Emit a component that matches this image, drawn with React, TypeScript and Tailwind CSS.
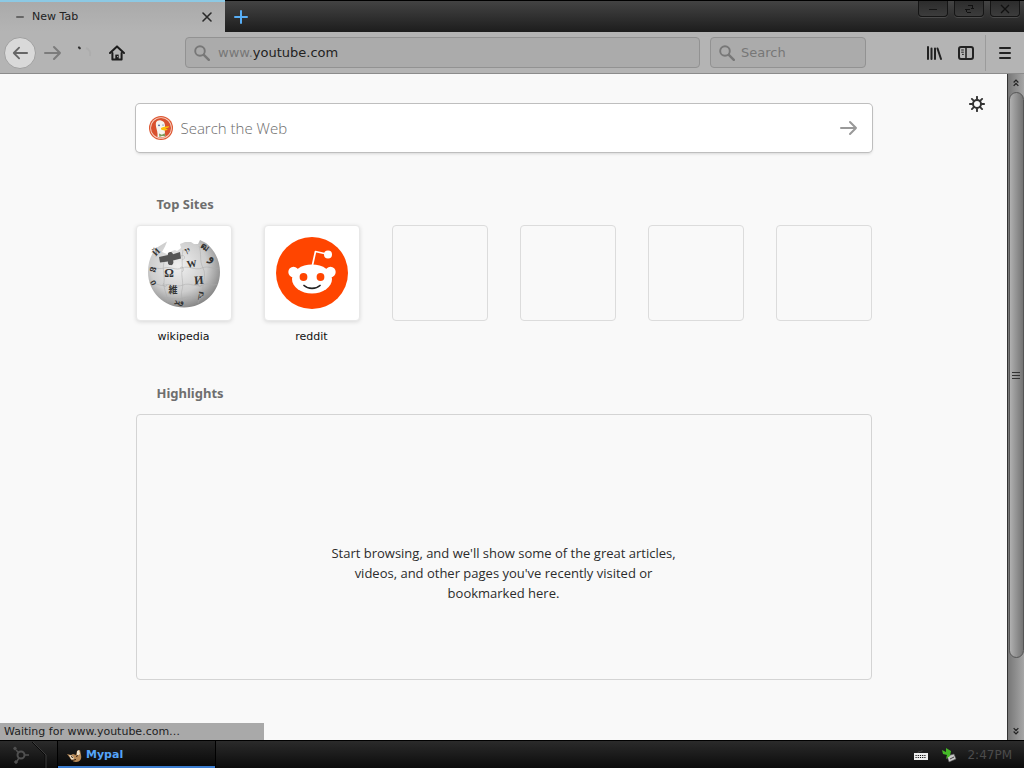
import { useState } from "react";

const topSites = [
  { label: "wikipedia", icon: <WikipediaGlobe /> },
  { label: "reddit", icon: <RedditMark /> }
];

const emptySlots = [0, 1, 2, 3];

function ArrowIcon({ className }: { className?: string }) {
  return (
    <svg viewBox="0 0 18 16" className={className} fill="none" stroke="currentColor" strokeWidth="2" strokeLinecap="round" strokeLinejoin="round">
      <path d="M1 8h15M10 2l6 6-6 6" />
    </svg>
  );
}

function SearchIcon() {
  return (
    <svg viewBox="0 0 16 16" className="h-4 w-4 shrink-0 text-[#777]" fill="none" stroke="currentColor">
      <circle cx="6" cy="6" r="4.8" strokeWidth="1.9" />
      <path d="M9.8 9.8l5 5" strokeWidth="2.4" strokeLinecap="round" />
    </svg>
  );
}

function CloseIcon() {
  return (
    <svg viewBox="0 0 12 12" className="h-3 w-3" fill="none" stroke="#2a2a2a" strokeWidth="1.6" strokeLinecap="round">
      <path d="M2 2l8 8M10 2l-8 8" />
    </svg>
  );
}

function HomeIcon() {
  return (
    <svg viewBox="0 0 16 16" className="h-4 w-4" fill="none" stroke="#1c1c1c" strokeLinejoin="round" strokeLinecap="round">
      <path d="M1 8l7-6.6L15 8" strokeWidth="2" />
      <path d="M3.4 8v6.6h9.2V8" strokeWidth="2" />
      <path d="M8 14V9.6" strokeWidth="3.4" strokeLinecap="butt" />
      <circle cx="8.6" cy="11.6" r=".6" fill="#bbb" stroke="none" />
    </svg>
  );
}

function LibraryIcon() {
  return (
    <svg viewBox="0 0 16 16" className="h-4 w-4" fill="none" stroke="#222" strokeWidth="2" strokeLinecap="round">
      <path d="M2 2v12M5.500 3.500V14M9 3.500V14M11.500 3.500L15 14" />
    </svg>
  );
}

function SidebarIcon() {
  return (
    <svg viewBox="0 0 16 14" className="h-3.5 w-4" fill="none" stroke="#222">
      <rect x="1" y="1" width="14" height="12" rx="2" strokeWidth="2" />
      <path d="M8 1v12" strokeWidth="1.6" />
      <path d="M3.2 4h2.6M3.2 6.2h2.6M4 8.4h1.8" strokeWidth="1" />
    </svg>
  );
}

function MenuIcon() {
  return (
    <svg viewBox="0 0 14 14" className="h-3.5 w-3.5" stroke="#222" strokeWidth="2" strokeLinecap="round">
      <path d="M2 2h10M2 7h10M2 12h10" />
    </svg>
  );
}

function GearIcon() {
  return (
    <svg viewBox="0 0 16 16" className="h-4 w-4" fill="none" stroke="#333">
      <circle cx="8" cy="8" r="4" strokeWidth="2" />
      <path
        d="M8 .8V4M8 12v3.2M.8 8H4M12 8h3.2M2.9 2.9l2.2 2.2M10.9 10.9l2.2 2.2M13.1 2.9l-2.2 2.2M5.1 10.9l-2.2 2.2"
        strokeWidth="1.9"
        strokeLinecap="round"
      />
    </svg>
  );
}

function DuckIcon() {
  return (
    <svg viewBox="0 0 24 24" className="h-6 w-6 shrink-0">
      <circle cx="12" cy="12" r="12" fill="#de5833" />
      <circle cx="12" cy="12" r="10.8" fill="#f6d5c8" />
      <circle cx="12" cy="12" r="10" fill="#d9502e" />
      <path d="M7 6.500C8 4.500 10 4 12 4.500c2.800.6 4 2.600 4 5.400 0 3-.4 5 .4 10.300-2.600 1.500-5.600 1.600-8 .6C9.500 16 6 11 7 6.500Z" fill="#f6f3ee" />
      <circle cx="10" cy="9.4" r=".8" fill="#2d4f8e" />
      <circle cx="14" cy="9" r=".6" fill="#2d4f8e" />
      <path d="M12 12c2-1.300 5-1.500 8-1.700.6 1.300-2.600 2-4 2.300 1.200.5 2.400.3 2.600.8-1.400 1.600-5.600 1.200-6.600-.1Z" fill="#fdc20a" />
      <path d="M10 17.500l2.800 1.300 3-1.500.4 3-3.200-.4-2.600 1Z" fill="#7d9b5a" />
    </svg>
  );
}

function WikipediaGlobe() {
  return (
    <svg viewBox="0 0 72 72" className="h-[72px] w-[72px]">
      <defs>
        <radialGradient id="globe" cx="42%" cy="38%" r="66%">
          <stop offset="0" stopColor="#f0f0f0" />
          <stop offset=".6" stopColor="#cdcdcd" />
          <stop offset="1" stopColor="#808080" />
        </radialGradient>
      </defs>
      <path
        d="M9 10.500 L19 4.500 17 9.500 14 15 19 17l5-3 3-1 2 1 4-3-1-4 5-2 6 0 3 2 4 0 2-4 6 3C68 14 72 25 72 35c0 20-16 35.500-36 35.500S0 55 0 35C0 25 3 17 9 10.500Z"
        fill="url(#globe)"
      />
      <path d="M11 20l9-2c-1-3 4-4.500 5-.8l7-2.200 1 6.500-8 2c1 2 0 5-2.500 4.600-2.500-.1-2.800-2.100-2.500-3.600L12 25.500Z" fill="#555" />
      <g fill="none" stroke="#aaa" strokeWidth=".5">
        <path d="M35 13c-2 8 0 14-1 20s2 14 0 20 2 11 1 16" />
        <path d="M51 9c3 8 0 14 4 22s-1 15 0 22-4 8-5 13" />
        <path d="M16 25c-2 8 1 14 0 20s3 12 4 20" />
        <path d="M1 31c6-2 8 2 15 0s11 3 18 0 13 3 20 0 11 2 17 0" />
        <path d="M3 47c6-2 8 3 14 1s11 3 18 0 13 3 20 0 9 2 14-1" />
        <path d="M14 61c6-2 12 3 21 0s13 2 20-1" />
        <path d="M32 31c3-3 5 2 2 4M53 46c3 3-2 5-3 2M16 46c-3 3 2 5 3 2M33 19c4-2 5 3 1 4" />
      </g>
      <g fill="#333" fontFamily="'Liberation Serif', 'Noto Sans CJK JP', serif" fontWeight="bold" textAnchor="middle">
        <text x="21" y="40" fontSize="12">Ω</text>
        <text x="44" y="30" fontSize="10" transform="rotate(-8 44 28)">W</text>
        <text x="51" y="47" fontSize="12" transform="rotate(-5 51 44)">И</text>
        <text x="25" y="56" fontSize="9">維</text>
        <text x="53" y="61" fontSize="11" transform="rotate(10 53 58)">ק</text>
        <text x="40" y="17" fontSize="10" transform="rotate(-20 40 15)">יו</text>
        <text x="56" y="13" fontSize="9" transform="rotate(35 56 11)">ฒ</text>
        <text x="64" y="24" fontSize="12" transform="rotate(20 64 21)">و</text>
        <text x="8" y="18" fontSize="9" transform="rotate(-45 8 15)">Й</text>
        <text x="5" y="35" fontSize="9" transform="rotate(-75 5 32)">ន</text>
        <text x="6" y="49" fontSize="9" transform="rotate(60 6 46)">ი</text>
        <text x="31" y="67" fontSize="8">ويد</text>
      </g>
    </svg>
  );
}

function RedditMark() {
  return (
    <svg viewBox="0 0 72 72" className="h-[72px] w-[72px]">
      <circle cx="36" cy="36" r="36" fill="#ff4500" />
      <path d="M36.500 28l3-13.500 11 2.500" fill="none" stroke="#fff" strokeWidth="1.700" strokeLinejoin="round" />
      <circle cx="52" cy="17.500" r="4" fill="#fff" />
      <circle cx="17.500" cy="35" r="5.200" fill="#fff" />
      <circle cx="54.500" cy="35" r="5.200" fill="#fff" />
      <ellipse cx="36" cy="42" rx="20" ry="14.500" fill="#fff" />
      <circle cx="27.500" cy="40" r="3.900" fill="#ff4500" />
      <circle cx="44.500" cy="40" r="3.900" fill="#ff4500" />
      <path d="M28 48.500c4 3.800 12 3.800 16 0" fill="none" stroke="#222" strokeWidth="1.700" strokeLinecap="round" />
    </svg>
  );
}

function WindowControls() {
  const button =
    "flex h-4 w-[30px] items-center justify-center rounded-b border border-t-0 border-[#151515] bg-gradient-to-b from-[#2c2c2c] to-[#3c3c3c] shadow-[0_1px_0_#4a4a4a]";
  return (
    <div className="flex h-4 gap-1.5 pr-1">
      <button className={button} aria-label="Minimize">
        <svg viewBox="0 0 12 12" className="h-3 w-3" stroke="#151515" fill="none">
          <path d="M2 6.500h8" />
        </svg>
      </button>
      <button className={button} aria-label="Restore">
        <svg viewBox="0 0 12 12" className="h-3 w-3" stroke="#111" fill="none">
          <path d="M5 2.500h5M8 5.500h3M2 6.500h5M4 9.500h4M9.500 3v2M3.500 7v2" />
        </svg>
      </button>
      <button className={button} aria-label="Close window">
        <svg viewBox="0 0 12 12" className="h-3 w-3" stroke="#111" strokeWidth="1.300" fill="none">
          <path d="M2 2l8 8M10 2l-8 8" />
        </svg>
      </button>
    </div>
  );
}

function TitleBar() {
  return (
    <header className="flex h-8 shrink-0 bg-gradient-to-b from-[#454545] via-[#313131] to-[#1d1d1d]">
      <div className="flex w-[225px] items-center border-t-2 border-[#8cc9e4] bg-gradient-to-b from-[#aaa] to-[#b4b4b4] pr-3 pl-4">
        <span className="h-0.5 w-2 rounded-full bg-[#666]" />
        <span className="ml-2 flex-1 text-[11px] text-[#222]">New Tab</span>
        <button aria-label="Close tab">
          <CloseIcon />
        </button>
      </div>
      <div className="flex flex-1 items-start justify-between border-t border-black">
        <button className="flex h-full w-8 items-center justify-center" aria-label="New tab">
          <svg viewBox="0 0 14 14" className="h-3.5 w-3.5" stroke="#58aef5" strokeWidth="2" strokeLinecap="round">
            <path d="M7 1v12M1 7h12" />
          </svg>
        </button>
        <WindowControls />
      </div>
    </header>
  );
}

function Toolbar() {
  const [address, setAddress] = useState("");
  const [query, setQuery] = useState("");

  return (
    <nav className="flex h-[42px] shrink-0 items-center border-b border-[#8c8c8c] bg-[#b4b4b4] text-[13px]">
      <button className="ml-1 flex h-8 w-8 items-center justify-center rounded-full border border-[#a0a0a0] bg-[#d9d9d9] text-[#666]" aria-label="Back">
        <ArrowIcon className="h-4 w-4 rotate-180" />
      </button>
      <button className="ml-2 text-[#7c7c7c]" aria-label="Forward">
        <ArrowIcon className="h-4 w-[18px]" />
      </button>
      <button className="ml-3.5 h-4 w-4" aria-label="Reload">
        <svg viewBox="0 0 16 16" className="h-4 w-4" fill="none">
          <path d="M3 2.500l.8.8" stroke="#333" strokeWidth="2.200" strokeLinecap="round" />
          <path d="M10 3c3 1 5 4 4 8" stroke="#adadad" strokeWidth="2" />
        </svg>
      </button>
      <button className="ml-[17px]" aria-label="Home">
        <HomeIcon />
      </button>

      <label className="relative ml-[60px] flex h-[31px] flex-1 items-center gap-2 rounded-sm border border-[#929292] bg-[#ababab] px-2">
        <SearchIcon />
        <input
          className="peer w-full bg-transparent text-[#222] outline-none"
          aria-label="Address"
          value={address}
          onChange={(event) => setAddress(event.target.value)}
          placeholder=" "
        />
        <span className="pointer-events-none absolute left-8 hidden text-[#222] peer-placeholder-shown:block">
          <span className="text-[#777]">www.</span>youtube.com
        </span>
      </label>
      <label className="ml-2.5 flex h-[31px] w-[156px] items-center gap-1.5 rounded-sm border border-[#929292] bg-[#ababab] px-2">
        <SearchIcon />
        <input
          className="w-full min-w-0 bg-transparent text-[#222] outline-none placeholder:text-[#777]"
          aria-label="Search"
          placeholder="Search"
          value={query}
          onChange={(event) => setQuery(event.target.value)}
        />
      </label>

      <button className="ml-[60px]" aria-label="Library">
        <LibraryIcon />
      </button>
      <button className="ml-4" aria-label="Sidebars">
        <SidebarIcon />
      </button>
      <span className="ml-[11px] h-9 w-px bg-[#9b9b9b]" />
      <button className="mr-3 ml-3" aria-label="Open menu">
        <MenuIcon />
      </button>
    </nav>
  );
}

function NewTabPage() {
  return (
    <main className="relative flex-1 overflow-hidden bg-[#f9f9f9] pt-[30px] font-['Noto_Sans',sans-serif]">
      <button className="absolute top-[22px] right-[22px]" aria-label="Customize">
        <GearIcon />
      </button>
      <div className="mx-auto w-[736px] max-w-full">
        <form
          className="flex h-12 items-center rounded-sm bg-white pr-3.5 pl-[13px] shadow-[0_0_0_1px_#bebebe,0_2px_3px_#0002]"
          onSubmit={(event) => event.preventDefault()}
        >
          <DuckIcon />
          <input
            className="ml-2 flex-1 font-['Open_Sans',sans-serif] text-[15px] font-light outline-none placeholder:text-[#6c6c6c]"
            aria-label="Search the Web"
            placeholder="Search the Web"
          />
          <button className="text-[#999]" aria-label="Submit">
            <ArrowIcon className="h-4 w-[18px]" />
          </button>
        </form>

        <section>
          <h2 className="mt-[42px] ml-[21px] text-[13px] leading-5 font-bold text-[#6e6e6e]">Top Sites</h2>
          <ul className="mt-[11px] grid grid-cols-6 gap-x-8">
            {topSites.map((site) => (
              <li key={site.label}>
                <a href={"#" + site.label} className="block text-center">
                  <span className="flex h-24 items-center justify-center rounded border border-[#e8e8e8] bg-white shadow-[0_1px_4px_#0002]">
                    {site.icon}
                  </span>
                  <span className="mt-2 block font-['DejaVu_Sans',sans-serif] text-[11px] leading-4 text-[#111]">
                    {site.label}
                  </span>
                </a>
              </li>
            ))}
            {emptySlots.map((slot) => (
              <li key={slot} className="h-24 rounded border border-[#dcdcdc]" />
            ))}
          </ul>
        </section>

        <section>
          <h2 className="mt-[38px] ml-[21px] text-[13px] leading-5 font-bold text-[#6e6e6e]">Highlights</h2>
          <div className="mt-[11px] h-[266px] rounded-sm border border-[#d4d4d4] pt-32">
            <p className="mx-auto w-[350px] text-center font-['Open_Sans',sans-serif] text-[13px] leading-5 text-[#2c2c2c]">
              Start browsing, and we'll show some of the great articles, videos, and other pages you've recently visited or
              bookmarked here.
            </p>
          </div>
        </section>
      </div>

      <div className="absolute bottom-0 left-0 flex h-[17px] w-[264px] items-end bg-[#a9a9a9] pl-1 font-['DejaVu_Sans',sans-serif] text-[11px] leading-4 text-[#222]">
        Waiting for www.youtube.com…
      </div>
    </main>
  );
}

function ScrollBar() {
  return (
    <div className="flex w-[17px] shrink-0 flex-col items-center border-l border-[#333] bg-gradient-to-r from-[#777] to-[#a6a6a6]">
      <svg viewBox="0 0 17 18" className="h-[18px] w-4 shrink-0" fill="none" stroke="#222" strokeWidth="1.300">
        <path d="M6 8.500L8.500 6 11 8.500M6 12l2.500-2.500L11 12" />
      </svg>
      <div className="flex h-[566px] w-[15px] items-center justify-center rounded-full border border-[#555] bg-gradient-to-r from-[#b0b0b0] to-[#747474]">
        <svg viewBox="0 0 8 8" className="h-2 w-2" stroke="#333">
          <path d="M0 1.500h8M0 4.500h8M0 7.500h8" />
        </svg>
      </div>
      <svg viewBox="0 0 17 18" className="mt-auto h-[18px] w-4 shrink-0" fill="none" stroke="#222" strokeWidth="1.300">
        <path d="M6 6l2.500 2.500L11 6M6 9.500L8.500 12 11 9.500" />
      </svg>
    </div>
  );
}

function TaskBar() {
  return (
    <footer className="flex h-7 shrink-0 items-stretch border-t border-black bg-gradient-to-b from-[#2b2b2b] to-[#0c0c0c] text-[11px]">
      <button className="flex w-[58px] items-center border-r border-black pl-3" aria-label="Start">
        <svg viewBox="0 0 36 26" className="h-[26px] w-9" fill="none" stroke="#505050">
          <circle cx="9" cy="13" r="3.500" strokeWidth="2" />
          <circle cx="3" cy="6.500" r="1.300" fill="#505050" />
          <circle cx="4" cy="20" r="1.300" fill="#505050" />
          <path d="M4 8l3 3M13 13h4M5 19l2-3" strokeWidth="1.500" />
          <path d="M20 0l13 13v13" stroke="#080808" />
          <path d="M21 0l13 13v13" stroke="#3b3b3b" />
        </svg>
      </button>
      <button className="flex w-[158px] items-center gap-1 border-r border-black bg-gradient-to-b from-[#242424] to-[#080808] pt-0.5 pl-2 font-bold text-[#55a4fa] shadow-[inset_0_-3px_0_-1px_#3c7dd0]">
        <svg viewBox="0 0 16 16" className="h-4 w-4">
          <path d="M1 6l4 1 2-1 3 1 1-4 3-1 1 5c1 4-1 7-5 7-4 0-5-3-9-8Z" fill="#b88a57" />
          <path d="M3 7l4 1 1 4-3-1ZM11 3l2-1 1 4-3 2Z" fill="#eee0c8" />
          <path d="M5 8.500l2 1M10 8.500l2-1M6 12.500l4-1" stroke="#2c1a0d" />
        </svg>
        Mypal
      </button>
      <div className="ml-auto flex items-center pr-3">
        <svg viewBox="0 0 16 12" className="h-3 w-4">
          <path d="M5 4C5 1 9 4 9 1" fill="none" stroke="#444" />
          <rect x="1" y="4" width="14" height="7" fill="#eee" />
          <path d="M2.500 6.500h11M2.500 8.500h11" stroke="#111" strokeDasharray="1.200 1" />
        </svg>
        <svg viewBox="0 0 16 16" className="ml-3 h-4 w-4">
          <path d="M6 9l7-2 2 5-7 3Z" fill="#c7c7c7" stroke="#555" strokeWidth=".6" />
          <path d="M1 3l4 2V1l5 3-1 5-4 3 1-4-4-1Z" fill="#45b827" />
          <path d="M9 12l4-2" stroke="#444" />
        </svg>
        <time className="ml-2.5 text-[12px] text-[#4b4b4b]">2:47PM</time>
      </div>
    </footer>
  );
}

export default function App() {
  return (
    <div className="flex h-screen flex-col overflow-hidden bg-[#f9f9f9] font-['DejaVu_Sans',sans-serif]">
      <TitleBar />
      <Toolbar />
      <div className="flex min-h-0 flex-1">
        <NewTabPage />
        <ScrollBar />
      </div>
      <TaskBar />
    </div>
  );
}
